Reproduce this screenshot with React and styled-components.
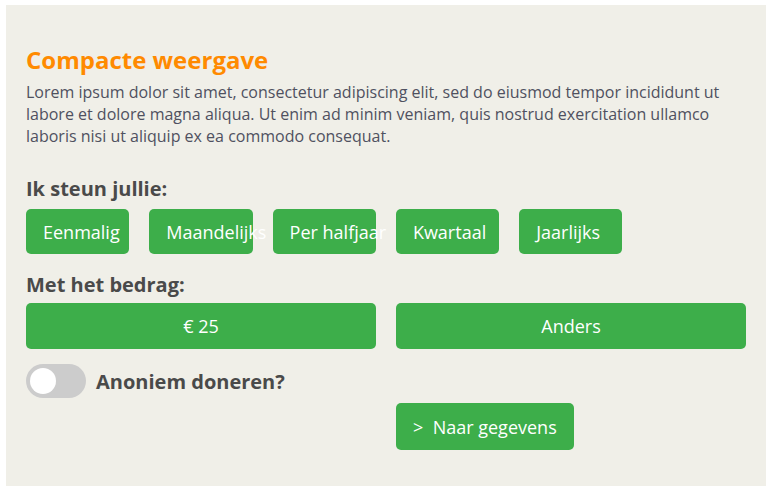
import React, { useState } from 'react';
import styled, { createGlobalStyle } from 'styled-components';

const GlobalStyle = createGlobalStyle`
  body {
    margin: 0;
    background: #ffffff;
    font-family: "Open Sans", "Liberation Sans", sans-serif;
  }
`;

const Panel = styled.section`
  margin: 5px 0 0 6px;
  width: 760px;
  box-sizing: border-box;
  background: #f0efe8;
  padding: 40px 20px 36px 20px;
`;

const Title = styled.h2`
  margin: 0;
  font-size: 24px;
  line-height: 30px;
  font-weight: 700;
  color: #ff8a00;
`;

const Intro = styled.p`
  margin: 6px 0 0;
  font-size: 16px;
  line-height: 22px;
  color: #4f5160;
`;

const Label = styled.h3`
  margin: ${p => p.$top}px 0 ${p => p.$bottom}px;
  font-size: 20px;
  line-height: 26px;
  font-weight: 700;
  color: #4a4a4a;
`;

const OptionRow = styled.div`
  display: flex;
  gap: 20px;
`;

const Option = styled.button`
  width: 103.3px;
  height: 45px;
  padding: 0 0 0 17px;
  border: 0;
  border-radius: 5px;
  background: #3dae4a;
  color: #ffffff;
  font-family: inherit;
  font-size: 18px;
  text-align: left;
  white-space: nowrap;
  overflow: visible;
  cursor: pointer;
`;

const AmountGrid = styled.div`
  display: grid;
  grid-template-columns: 1fr 1fr;
  gap: 20px;
`;

const Amount = styled.button`
  height: 46px;
  border: 0;
  border-radius: 5px;
  background: #3dae4a;
  color: #ffffff;
  font-family: inherit;
  font-size: 18px;
  cursor: pointer;
`;

const ToggleRow = styled.label`
  display: flex;
  align-items: center;
  gap: 10px;
  margin-top: 15px;
  cursor: pointer;
`;

const Track = styled.span`
  position: relative;
  width: 60px;
  height: 34px;
  border-radius: 17px;
  background: ${p => (p.$on ? '#3dae4a' : '#cccccc')};
  flex-shrink: 0;

  &::after {
    content: '';
    position: absolute;
    top: 4px;
    left: ${p => (p.$on ? '30px' : '4px')};
    width: 26px;
    height: 26px;
    border-radius: 50%;
    background: #ffffff;
  }
`;

const ToggleText = styled.span`
  font-size: 20px;
  font-weight: 700;
  color: #4a4a4a;
`;

const Footer = styled.div`
  display: grid;
  grid-template-columns: 1fr 1fr;
  gap: 20px;
  margin-top: 5px;
`;

const Next = styled.button`
  grid-column: 2;
  justify-self: start;
  height: 47px;
  padding: 0 17px;
  border: 0;
  border-radius: 5px;
  background: #3dae4a;
  color: #ffffff;
  font-family: inherit;
  font-size: 18px;
  cursor: pointer;
`;

const periods = ['Eenmalig', 'Maandelijks', 'Per halfjaar', 'Kwartaal', 'Jaarlijks'];

export default function App() {
  const [anon, setAnon] = useState(false);
  return (
    <>
      <GlobalStyle />
      <Panel>
        <Title>Compacte weergave</Title>
        <Intro>
          Lorem ipsum dolor sit amet, consectetur adipiscing elit, sed do eiusmod tempor incididunt ut
          labore et dolore magna aliqua. Ut enim ad minim veniam, quis nostrud exercitation ullamco
          laboris nisi ut aliquip ex ea commodo consequat.
        </Intro>

        <Label $top={29} $bottom={7}>Ik steun jullie:</Label>
        <OptionRow>
          {periods.map(p => (
            <Option key={p}>{p}</Option>
          ))}
        </OptionRow>

        <Label $top={18} $bottom={5}>Met het bedrag:</Label>
        <AmountGrid>
          <Amount>€ 25</Amount>
          <Amount>Anders</Amount>
        </AmountGrid>

        <ToggleRow onClick={() => setAnon(!anon)}>
          <Track $on={anon} />
          <ToggleText>Anoniem doneren?</ToggleText>
        </ToggleRow>

        <Footer>
          <Next>&gt;&nbsp; Naar gegevens</Next>
        </Footer>
      </Panel>
    </>
  );
}
